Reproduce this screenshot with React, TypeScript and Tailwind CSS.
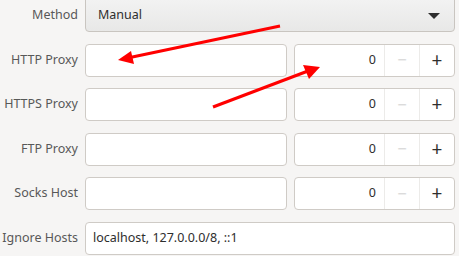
const hosts = ["HTTP Proxy", "HTTPS Proxy", "FTP Proxy", "Socks Host"];

function Label({ text }: { text: string }) {
  return (
    <div className="w-[78px] shrink-0 whitespace-nowrap text-right text-[12.5px] leading-none text-[#585858]">
      {text}
    </div>
  );
}

function SpinBox() {
  return (
    <div className="flex h-full w-[161px] shrink-0 rounded-[4px] border border-[#cfcbc6] bg-white">
      <div className="flex flex-1 items-center justify-end pr-[8px] text-[12.5px] text-[#2e2e2e]">0</div>
      <div className="flex w-[35px] items-center justify-center border-l border-[#ecebe9] text-[17px] font-light text-[#c4c4c4]">
        −
      </div>
      <div className="flex w-[35px] items-center justify-center border-l border-[#ecebe9] text-[19px] text-[#2e2e2e]">
        +
      </div>
    </div>
  );
}

export default function App() {
  return (
    <div
      className="relative h-[256px] w-[459px] overflow-hidden bg-[#f6f5f4]"
      style={{ fontFamily: '"Noto Sans", "DejaVu Sans", sans-serif' }}
    >
      <div className="-mt-px flex flex-col gap-[11.5px] pr-[4px]">
        <div className="flex h-[33px] items-center gap-[7px]">
          <Label text="Method" />
          <div className="flex h-full flex-1 items-center justify-between rounded-b-[4px] border border-[#c9c5c0] bg-gradient-to-b from-[#f2f2f2] to-[#e8e8e7] pl-[12px] pr-[14px] text-[12.5px] text-[#2e2e2e]">
            <span>Manual</span>
            <svg width="12" height="8" viewBox="0 0 12 8">
              <path d="M0 1h12L6 7z" fill="#2e2e2e" />
            </svg>
          </div>
        </div>
        {hosts.map((h) => (
          <div key={h} className="flex h-[33px] items-center gap-[7px]">
            <Label text={h} />
            <div className="h-full w-[202px] shrink-0 rounded-[4px] border border-[#cfcbc6] bg-white" />
            <SpinBox />
          </div>
        ))}
        <div className="flex h-[33px] items-center gap-[7px]">
          <Label text="Ignore Hosts" />
          <div className="flex h-full flex-1 items-center rounded-[4px] border border-[#cfcbc6] bg-white pl-[7px] text-[12.5px] text-[#2e2e2e]">
            localhost, 127.0.0.0/8, ::1
          </div>
        </div>
      </div>
      <svg className="pointer-events-none absolute left-0 top-0" width="459" height="256">
        <line x1="280" y1="26" x2="130" y2="57.5" stroke="#ff0000" strokeWidth="3" />
        <polygon points="118,60 131,51 134,64" fill="#ff0000" />
        <line x1="213" y1="107" x2="308" y2="71" stroke="#ff0000" strokeWidth="3" />
        <polygon points="320,67 303,65 309,79" fill="#ff0000" />
      </svg>
    </div>
  );
}
